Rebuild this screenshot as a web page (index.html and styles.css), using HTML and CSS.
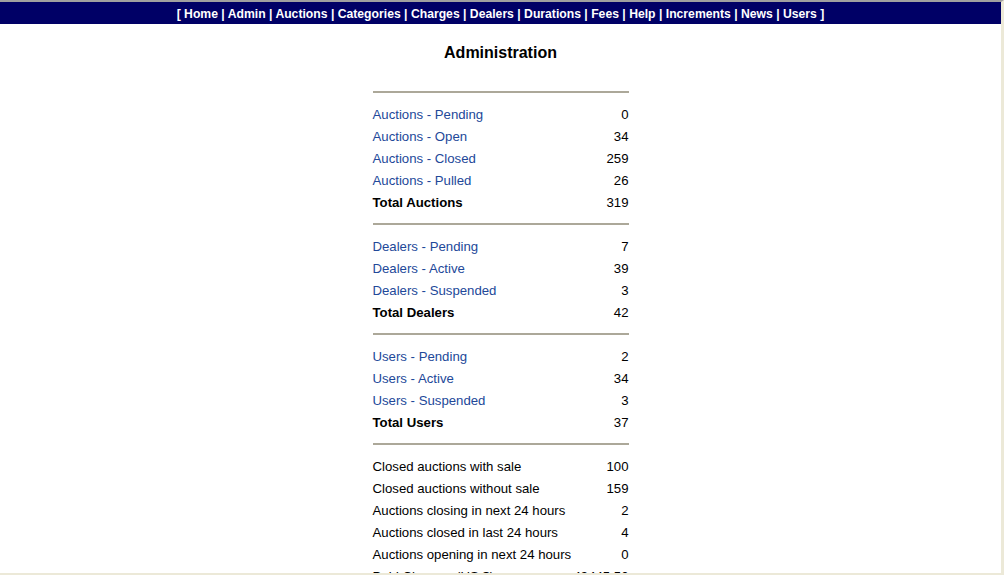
FILE: index.html
```html
<!DOCTYPE html>
<html>
<head>
<meta charset="utf-8">
<link rel="stylesheet" href="styles.css">
</head>
<body>
<div class="frame">
  <div class="page">
    <nav class="topnav">[ <a href="#">Home</a> | <a href="#">Admin</a> | <a href="#">Auctions</a> | <a href="#">Categories</a> | <a href="#">Charges</a> | <a href="#">Dealers</a> | <a href="#">Durations</a> | <a href="#">Fees</a> | <a href="#">Help</a> | <a href="#">Increments</a> | <a href="#">News</a> | <a href="#">Users</a> ]</nav>
    <h1 class="title">Administration</h1>
    <div class="stats">
      <div class="rule"></div>
      <a class="label link" href="#">Auctions - Pending</a><span class="num">0</span>
      <a class="label link" href="#">Auctions - Open</a><span class="num">34</span>
      <a class="label link" href="#">Auctions - Closed</a><span class="num">259</span>
      <a class="label link" href="#">Auctions - Pulled</a><span class="num">26</span>
      <span class="label total">Total Auctions</span><span class="num">319</span>
      <div class="rule"></div>
      <a class="label link" href="#">Dealers - Pending</a><span class="num">7</span>
      <a class="label link" href="#">Dealers - Active</a><span class="num">39</span>
      <a class="label link" href="#">Dealers - Suspended</a><span class="num">3</span>
      <span class="label total">Total Dealers</span><span class="num">42</span>
      <div class="rule"></div>
      <a class="label link" href="#">Users - Pending</a><span class="num">2</span>
      <a class="label link" href="#">Users - Active</a><span class="num">34</span>
      <a class="label link" href="#">Users - Suspended</a><span class="num">3</span>
      <span class="label total">Total Users</span><span class="num">37</span>
      <div class="rule"></div>
      <span class="label">Closed auctions with sale</span><span class="num">100</span>
      <span class="label">Closed auctions without sale</span><span class="num">159</span>
      <span class="label">Auctions closing in next 24 hours</span><span class="num">2</span>
      <span class="label">Auctions closed in last 24 hours</span><span class="num">4</span>
      <span class="label">Auctions opening in next 24 hours</span><span class="num">0</span>
      <span class="label">Paid Charges (US $)</span><span class="num">43445.50</span>
    </div>
  </div>
</div>
</body>
</html>
```
FILE: styles.css
```css
html, body {
  margin: 0;
  padding: 0;
  background: #ffffff;
}
.frame {
  width: 1004px;
  height: 575px;
  overflow: hidden;
  box-sizing: border-box;
  border-top: 2px solid #a0a0a0;
  border-bottom: 2px solid #ece9d8;
  border-right: 3px solid #ece9d8;
}
.page {
  height: 100%;
  overflow: hidden;
  font-family: "Liberation Sans", Arial, sans-serif;
  font-size: 13.2px;
  color: #000;
}
.topnav {
  background: #000066;
  color: #fff;
  font-weight: bold;
  font-size: 12.2px;
  text-align: center;
  height: 22px;
  line-height: 24px;
}
.topnav a {
  color: #fff;
  text-decoration: none;
}
.title {
  margin: 0;
  padding-top: 19px;
  height: 38px;
  box-sizing: content-box;
  font-size: 16px;
  line-height: 20px;
  text-align: center;
  font-weight: bold;
}
.stats {
  width: 256px;
  margin: 0 auto;
  display: grid;
  grid-template-columns: 1fr auto;
  grid-auto-rows: 22px;
  align-items: center;
}
.rule {
  grid-column: 1 / -1;
  height: 0;
  border-top: 2px solid #aca899;
}
.label,
.num {
  padding-top: 2px;
  line-height: 20px;
}
.label {
  white-space: nowrap;
}
.link {
  color: #224899;
  text-decoration: none;
}
.total {
  font-weight: bold;
}
.num {
  text-align: right;
}
```
